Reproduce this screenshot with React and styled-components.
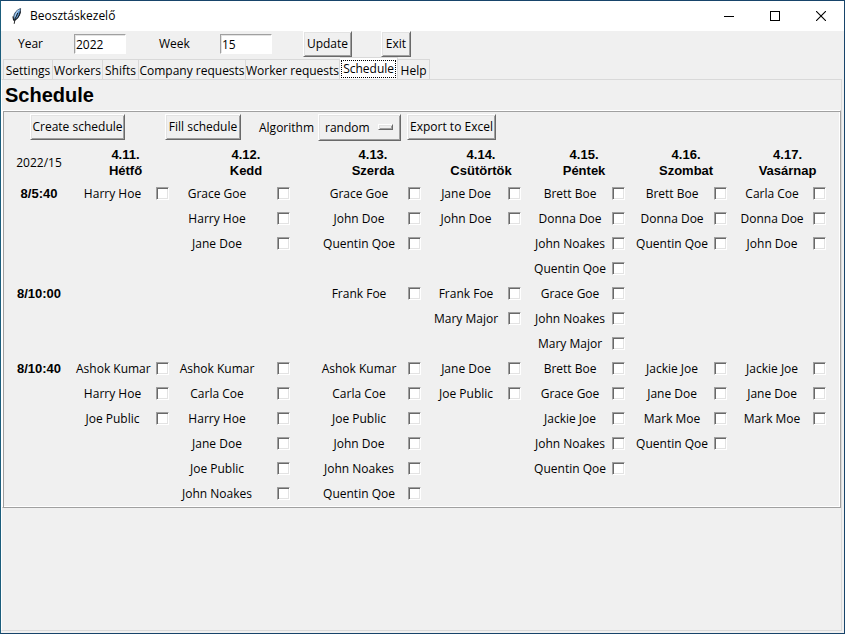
import React, { Fragment, useState } from "react";
import styled, { createGlobalStyle } from "styled-components";

const FACE = "#f0f0f0";
const LIGHT = "#e3e3e3";
const SHADE = "#a0a0a0";
const DARK = "#696969";

const GlobalStyle = createGlobalStyle`
  * { box-sizing: border-box; }
  body { margin: 0; }
  body, button, input, select {
    font-family: "Open Sans", "Noto Sans", sans-serif;
    font-size: 12px;
    line-height: 16px;
    color: #000;
  }
`;

const Window = styled.div`
  display: flex;
  flex-direction: column;
  min-height: 100vh;
  background: ${FACE};
  border: 1px solid #17446a;
  border-left-color: #1b5d7c;
`;

const TitleBar = styled.header`
  display: flex;
  align-items: center;
  height: 30px;
  padding-left: 8px;
  background: #fff;
`;

const Title = styled.h1`
  flex: 1;
  margin: 0 0 0 5px;
  font-size: 12px;
  font-weight: 400;
`;

const CaptionButton = styled.button`
  display: flex;
  align-items: center;
  justify-content: center;
  width: 46px;
  height: 30px;
  padding: 0;
  border: 0;
  background: transparent;
`;

const WeekBar = styled.form`
  display: flex;
  align-items: flex-start;
  height: 27px;
  padding-left: 17px;
`;

const FieldLabel = styled.label`
  width: ${(p) => p.$width}px;
  padding-top: ${(p) => p.$top || 5}px;
`;

const Entry = styled.input`
  width: 52px;
  height: 20px;
  margin: 3px ${(p) => p.$after}px 0 0;
  padding: 0 1px;
  border: 1px solid;
  border-color: ${SHADE} #fff #fff ${SHADE};
  box-shadow: inset 1px 1px ${LIGHT};
  border-radius: 0;
  background: #fff;
  outline: 0;
`;

const PushButton = styled.button`
  min-width: ${(p) => p.$width}px;
  height: 26px;
  margin-right: ${(p) => p.$after || 0}px;
  padding: 0;
  border: 1px solid;
  border-color: #fff ${DARK} ${DARK} #fff;
  box-shadow: inset 1px 1px ${LIGHT}, inset -1px -1px ${SHADE};
  border-radius: 0;
  background: ${FACE};
  white-space: nowrap;
`;

const TabList = styled.nav`
  display: flex;
  align-items: flex-end;
  height: 21px;
  padding-left: 2px;
`;

const Tab = styled.button`
  min-width: ${(p) => p.$width}px;
  height: ${(p) => (p.$active ? 22 : 20)}px;
  padding: ${(p) => (p.$active ? "2px 1px 1px" : "3px 0 0")};
  border: 1px solid #d9d9d9;
  border-left-width: ${(p) => (p.$first ? 1 : 0)}px;
  border-bottom: 0;
  background: ${(p) => (p.$active ? "#fff" : FACE)};
  white-space: nowrap;
`;

const TabText = styled.span`
  display: block;
  height: ${(p) => (p.$active ? 18 : 16)}px;
  border: ${(p) => (p.$active ? "1px dotted #000" : "0")};
`;

const Page = styled.main`
  flex: 1;
  margin: 0 2px 2px 0;
  border: 1px solid #d9d9d9;
  border-left-color: #fff;
`;

const PageTitle = styled.h2`
  margin: 0;
  padding: 4px 3px 3px;
  font: 700 20px/23px "Liberation Sans", Arial, sans-serif;
`;

const Frame = styled.section`
  padding: 3px 2px 1px;
  border: 1px solid;
  border-color: #fff ${SHADE} ${SHADE} #fff;
  box-shadow: inset 1px 1px ${SHADE}, inset -1px -1px #fff;
`;

const Toolbar = styled.div`
  display: flex;
  align-items: flex-start;
  height: 31px;
  padding-left: 25px;
`;

const SelectBox = styled.div`
  position: relative;
  margin-right: 6px;
`;

const Select = styled.select`
  appearance: none;
  width: 83px;
  height: 27px;
  padding: 0 6px;
  border: 1px solid;
  border-color: #fff ${DARK} ${DARK} #fff;
  box-shadow: inset 1px 1px ${LIGHT}, inset -1px -1px ${SHADE};
  border-radius: 0;
  background: ${FACE};
`;

const Indicator = styled.span`
  position: absolute;
  right: 8px;
  top: 10px;
  width: 15px;
  height: 6px;
  border: 1px solid;
  border-color: #fff ${DARK} ${DARK} #fff;
  box-shadow: inset 1px 1px ${LIGHT}, inset -1px -1px ${SHADE};
  pointer-events: none;
`;

const Grid = styled.table`
  width: 100%;
  table-layout: fixed;
  border-collapse: collapse;
`;

const Col = styled.col`
  width: ${(p) => p.$width}px;
`;

const WeekCell = styled.td`
  height: 36px;
  padding: 0 3px 0 0;
  text-align: center;
`;

const DayHead = styled.th`
  padding: 0;
  font: 700 13px/16px "Liberation Sans", Arial, sans-serif;
`;

const ShiftHead = styled(DayHead)`
  padding-right: 3px;
`;

const NameCell = styled.td`
  height: 25px;
  padding: 0;
  text-align: center;
  white-space: nowrap;
`;

const CheckCell = styled.td`
  padding: 0 0 0 ${(p) => p.$inset}px;
`;

const Check = styled.input`
  appearance: none;
  display: block;
  width: 13px;
  height: 13px;
  margin: 0;
  border: 1px solid;
  border-color: ${SHADE} #fff #fff ${SHADE};
  box-shadow: inset 1px 1px ${DARK}, inset -1px -1px ${LIGHT};
  background: #fff;
  &:checked {
    background: radial-gradient(#000 3px, #fff 4px);
  }
`;

const TABS = [
  ["Settings", 50],
  ["Workers", 50],
  ["Shifts", 36],
  ["Company requests", 107],
  ["Worker requests", 94],
  ["Schedule", 58],
  ["Help", 32],
];

const DAYS = [
  { date: "4.11.", name: "Hétfő", nameWidth: 73, checkWidth: 26, inset: 7 },
  { date: "4.12.", name: "Kedd", nameWidth: 84, checkWidth: 58, inset: 18 },
  { date: "4.13.", name: "Szerda", nameWidth: 84, checkWidth: 28, inset: 7 },
  { date: "4.14.", name: "Csütörtök", nameWidth: 74, checkWidth: 30, inset: 5 },
  { date: "4.15.", name: "Péntek", nameWidth: 74, checkWidth: 28, inset: 5 },
  { date: "4.16.", name: "Szombat", nameWidth: 74, checkWidth: 28, inset: 5 },
  { date: "4.17.", name: "Vasárnap", nameWidth: 70, checkWidth: 31, inset: 6 },
];

const SHIFTS = [
  {
    label: "8/5:40",
    days: [
      ["Harry Hoe"],
      ["Grace Goe", "Harry Hoe", "Jane Doe"],
      ["Grace Goe", "John Doe", "Quentin Qoe"],
      ["Jane Doe", "John Doe"],
      ["Brett Boe", "Donna Doe", "John Noakes", "Quentin Qoe"],
      ["Brett Boe", "Donna Doe", "Quentin Qoe"],
      ["Carla Coe", "Donna Doe", "John Doe"],
    ],
  },
  {
    label: "8/10:00",
    days: [
      [],
      [],
      ["Frank Foe"],
      ["Frank Foe", "Mary Major"],
      ["Grace Goe", "John Noakes", "Mary Major"],
      [],
      [],
    ],
  },
  {
    label: "8/10:40",
    days: [
      ["Ashok Kumar", "Harry Hoe", "Joe Public"],
      ["Ashok Kumar", "Carla Coe", "Harry Hoe", "Jane Doe", "Joe Public", "John Noakes"],
      ["Ashok Kumar", "Carla Coe", "Joe Public", "John Doe", "John Noakes", "Quentin Qoe"],
      ["Jane Doe", "Joe Public"],
      ["Brett Boe", "Grace Goe", "Jackie Joe", "John Noakes", "Quentin Qoe"],
      ["Jackie Joe", "Jane Doe", "Mark Moe", "Quentin Qoe"],
      ["Jackie Joe", "Jane Doe", "Mark Moe"],
    ],
  },
];

function Feather() {
  return (
    <svg width="16" height="16" viewBox="0 0 16 16" aria-hidden="true">
      <path d="M11.6 0.5 C8 1.5 5 5 4.6 9 L5 12.5 C8 11.5 10.6 8 11.4 4 Z" fill="#5b8fc4" stroke="#2a3a4c" strokeWidth="0.8" />
      <path d="M10.5 1.8 C8.3 3 6.6 6 6 9.5" fill="none" stroke="#a9cdee" strokeWidth="1.3" />
      <path d="M11.4 3.5 C10.8 7.5 8.5 11 6 12.2" fill="none" stroke="#111" />
      <path d="M8.8 5 L6 11 L5.2 15.8" fill="none" stroke="#111" strokeWidth="0.9" />
      <path d="M3.9 8.5 L4.6 12.5" stroke="#111" />
    </svg>
  );
}

function ShiftRows({ shift }) {
  const count = Math.max(...shift.days.map((names) => names.length));
  return Array.from({ length: count }, (_, row) => (
    <tr key={row}>
      {row === 0 ? <ShiftHead scope="row">{shift.label}</ShiftHead> : <td />}
      {DAYS.map((day, i) => {
        const name = shift.days[i][row];
        const id = `${shift.label}-${i}-${row}`;
        return (
          <Fragment key={day.date}>
            <NameCell>{name && <label htmlFor={id}>{name}</label>}</NameCell>
            <CheckCell $inset={day.inset}>{name && <Check type="checkbox" id={id} />}</CheckCell>
          </Fragment>
        );
      })}
    </tr>
  ));
}

export default function App() {
  const [active, setActive] = useState("Schedule");
  return (
    <Window>
      <GlobalStyle />
      <TitleBar>
        <Feather />
        <Title>Beosztáskezelő</Title>
        <CaptionButton aria-label="Minimize">
          <svg width="10" height="11" shapeRendering="crispEdges">
            <path d="M0 5.5H10" stroke="#000" />
          </svg>
        </CaptionButton>
        <CaptionButton aria-label="Maximize">
          <svg width="10" height="10" shapeRendering="crispEdges">
            <rect x="0.5" y="0.5" width="9" height="9" fill="none" stroke="#000" />
          </svg>
        </CaptionButton>
        <CaptionButton aria-label="Close">
          <svg width="10" height="10">
            <path d="M0 0L10 10M10 0L0 10" stroke="#000" strokeWidth="1.1" />
          </svg>
        </CaptionButton>
      </TitleBar>
      <WeekBar onSubmit={(e) => e.preventDefault()}>
        <FieldLabel htmlFor="year" $width={56}>Year</FieldLabel>
        <Entry id="year" defaultValue="2022" $after={33} />
        <FieldLabel htmlFor="week" $width={61}>Week</FieldLabel>
        <Entry id="week" defaultValue="15" $after={31} />
        <PushButton type="submit" $width={49} $after={29}>Update</PushButton>
        <PushButton type="button" $width={30}>Exit</PushButton>
      </WeekBar>
      <TabList role="tablist">
        {TABS.map(([name, width], i) => (
          <Tab
            key={name}
            type="button"
            role="tab"
            aria-selected={name === active}
            $active={name === active}
            $first={i === 0}
            $width={width}
            onClick={() => setActive(name)}
          >
            <TabText $active={name === active}>{name}</TabText>
          </Tab>
        ))}
      </TabList>
      <Page>
        <PageTitle>Schedule</PageTitle>
        <Frame>
          <Toolbar>
            <PushButton type="button" $width={95} $after={40}>Create schedule</PushButton>
            <PushButton type="button" $width={76} $after={18}>Fill schedule</PushButton>
            <FieldLabel htmlFor="algorithm" $width={59} $top={6}>Algorithm</FieldLabel>
            <SelectBox>
              <Select id="algorithm" defaultValue="random">
                <option>random</option>
              </Select>
              <Indicator />
            </SelectBox>
            <PushButton type="button" $width={89}>Export to Excel</PushButton>
          </Toolbar>
          <Grid>
            <colgroup>
              <Col $width={71} />
              {DAYS.map((day) => (
                <Fragment key={day.date}>
                  <Col $width={day.nameWidth} />
                  <Col $width={day.checkWidth} />
                </Fragment>
              ))}
            </colgroup>
            <thead>
              <tr>
                <WeekCell>2022/15</WeekCell>
                {DAYS.map((day) => (
                  <DayHead key={day.date} colSpan={2} scope="col">
                    {day.date}
                    <br />
                    {day.name}
                  </DayHead>
                ))}
              </tr>
            </thead>
            <tbody>
              {SHIFTS.map((shift) => (
                <ShiftRows key={shift.label} shift={shift} />
              ))}
            </tbody>
          </Grid>
        </Frame>
      </Page>
    </Window>
  );
}
